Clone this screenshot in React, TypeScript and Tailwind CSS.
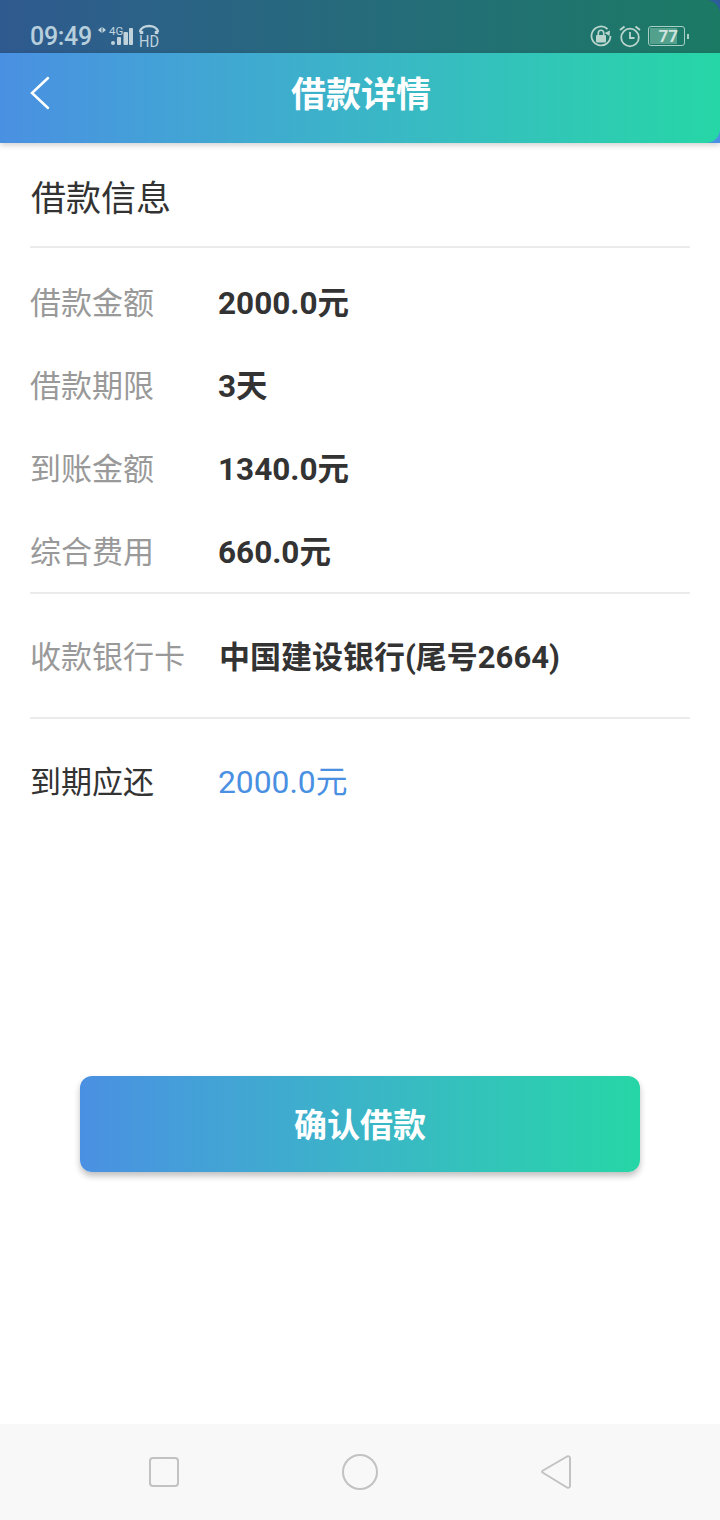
const fontStack = "font-['Roboto','Noto_Sans_CJK_SC',sans-serif]";

function StatusBar() {
	return (
		<div className="bg-[#2c5c99]">
			<div className="flex h-[53px] items-center justify-between rounded-tr-[14px] bg-linear-to-r from-[#2f5a8f] to-[#1b7a64] pt-[19px] pr-[31px] pl-[30px]">
				<div className="flex items-center gap-[4px]">
					<span className="pt-[2px] text-[25px] leading-[30px] font-medium tracking-[-0.3px] text-[#b7cfdc]">
						09:49
					</span>
					<svg width="64" height="30" viewBox="0 0 64 30" className="text-[#c0d3dd]">
						<path d="M5.500 6v6L2 9zM6.500 6v6L10 9z" fill="currentColor" />
						<text x="13" y="14" fontSize="11.500" fill="currentColor" fontFamily="Roboto, sans-serif">
							4G
						</text>
						<rect x="15" y="20" width="4" height="4" rx="2" fill="currentColor" />
						<rect x="21" y="16" width="4" height="8" rx="1" fill="currentColor" />
						<rect x="27.500" y="11" width="4.500" height="13" rx="1" fill="currentColor" />
						<rect x="33" y="7" width="4" height="17" rx="1" fill="currentColor" />
						<path d="M44 11c1-8 17-8 18 0" fill="none" stroke="currentColor" strokeWidth="2.500" />
						<path d="M45.500 10v3M60.500 10v3" stroke="currentColor" strokeWidth="3.500" />
						<text x="43" y="26" fontSize="16" textLength="20" lengthAdjust="spacingAndGlyphs" fill="currentColor" fontFamily="Roboto, sans-serif">
							HD
						</text>
					</svg>
				</div>
				<div className="flex items-center gap-[7px]">
					<svg width="22" height="22" viewBox="0 0 22 22" className="text-[#b9d5cd]">
						<path d="M20.500 11a9.500 9.500 0 1 1-3-7" fill="none" stroke="currentColor" strokeWidth="1.800" />
						<path d="M20 5.500l-.5 5.500-5-3z" fill="currentColor" />
						<rect x="6" y="10" width="10" height="7.500" rx="1" fill="currentColor" />
						<path d="M8.300 10V8a2.700 2.700 0 0 1 5.400 0v2" fill="none" stroke="currentColor" strokeWidth="1.600" />
					</svg>
					<svg width="22" height="24" viewBox="0 0 22 24" className="text-[#b9d5cd]">
						<circle cx="11" cy="13.500" r="8.800" fill="none" stroke="currentColor" strokeWidth="1.800" />
						<path d="M11 8v6h4.500" fill="none" stroke="currentColor" strokeWidth="1.800" />
						<path d="M1 6l4.500-3.500M21 6l-4.500-3.500" stroke="currentColor" strokeWidth="2" />
					</svg>
					<div className="flex items-center gap-[2px]">
						<div className="flex h-[20px] w-[37px] items-center rounded-[3px] border border-[#a9cfc4] p-[1px]">
							<div className="flex h-full w-[27px] items-center justify-end bg-[#53a08c] text-[17px] leading-none font-bold text-[#cfe4de]">
								<span className="-mr-[1px]">77</span>
							</div>
						</div>
						<div className="h-[5px] w-[2px] bg-[#a9cfc4]" />
					</div>
				</div>
			</div>
		</div>
	);
}

function Header() {
	return (
		<div className="bg-[#4a90e2] shadow-[0_2px_6px_rgba(0,0,0,0.2)]">
			<div className="relative flex h-[90px] items-center justify-center rounded-br-[14px] bg-linear-to-r from-[#4a90e2] to-[#26d6a6] pb-[6px]">
				<svg
					width="20"
					height="34"
					viewBox="0 0 20 34"
					className="absolute top-[23px] left-[30px] text-white"
				>
					<path d="M18 2L2 17l16 15" fill="none" stroke="currentColor" strokeWidth="2.500" strokeLinecap="round" />
				</svg>
				<h1 className="pl-[2px] text-[35px] leading-none font-bold text-white">借款详情</h1>
			</div>
		</div>
	);
}

function Row({ label, value }: { label: string; value: string }) {
	return (
		<div className="flex h-[83px] items-center pt-[5px]">
			<span className="w-[188px] text-[31px] text-[#999999]">{label}</span>
			<span className="text-[31.500px] font-bold text-[#333333]">{value}</span>
		</div>
	);
}

function NavBar() {
	return (
		<div className="flex h-[96px] items-center justify-between bg-[#f8f8f8] pr-[148px] pl-[149px]">
			<div className="h-[30px] w-[30px] rounded-[4px] border-2 border-[#c2c2c2]" />
			<div className="h-[36px] w-[36px] rounded-full border-2 border-[#c2c2c2]" />
			<svg width="32" height="36" viewBox="0 0 32 36" className="text-[#c2c2c2]">
				<path
					d="M2.500 18.500q-1-1 .5-2L27 2.500q3-1 3 2v27q0 3-3 2z"
					fill="none"
					stroke="currentColor"
					strokeWidth="2"
					strokeLinejoin="round"
				/>
			</svg>
		</div>
	);
}

export default function App() {
	return (
		<div className={`flex h-[1520px] w-[720px] flex-col overflow-hidden bg-white ${fontStack}`}>
			<StatusBar />
			<Header />
			<main className="flex flex-1 flex-col px-[30px]">
				<div className="flex h-[105px] items-center border-b-2 border-[#ebebeb] pt-[12px] pl-[1px]">
					<h2 className="text-[35px] text-[#333333]">借款信息</h2>
				</div>
				<div className="border-b-2 border-[#ebebeb] pt-[12px]">
					<Row label="借款金额" value="2000.0元" />
					<Row label="借款期限" value="3天" />
					<Row label="到账金额" value="1340.0元" />
					<Row label="综合费用" value="660.0元" />
				</div>
				<div className="flex h-[125px] items-center border-b-2 border-[#ebebeb] pt-[6px]">
					<span className="w-[188px] text-[31px] text-[#999999]">收款银行卡</span>
					<span className="pl-[1px] text-[31px] font-bold text-[#333333]">中国建设银行(尾号2664)</span>
				</div>
				<div className="flex h-[128px] items-center">
					<span className="w-[188px] text-[31px] text-[#333333]">到期应还</span>
					<span className="text-[31.800px] text-[#4a90e2]">2000.0元</span>
				</div>
				<div className="mt-[229px] flex justify-center">
					<button
						type="button"
						className="h-[96px] w-[560px] rounded-[12px] bg-linear-to-r from-[#4a90e2] to-[#26d6a6] pt-[4px] text-[33px] font-bold text-white shadow-[0_4px_6px_rgba(0,0,0,0.25)]"
					>
						确认借款
					</button>
				</div>
			</main>
			<NavBar />
		</div>
	);
}
